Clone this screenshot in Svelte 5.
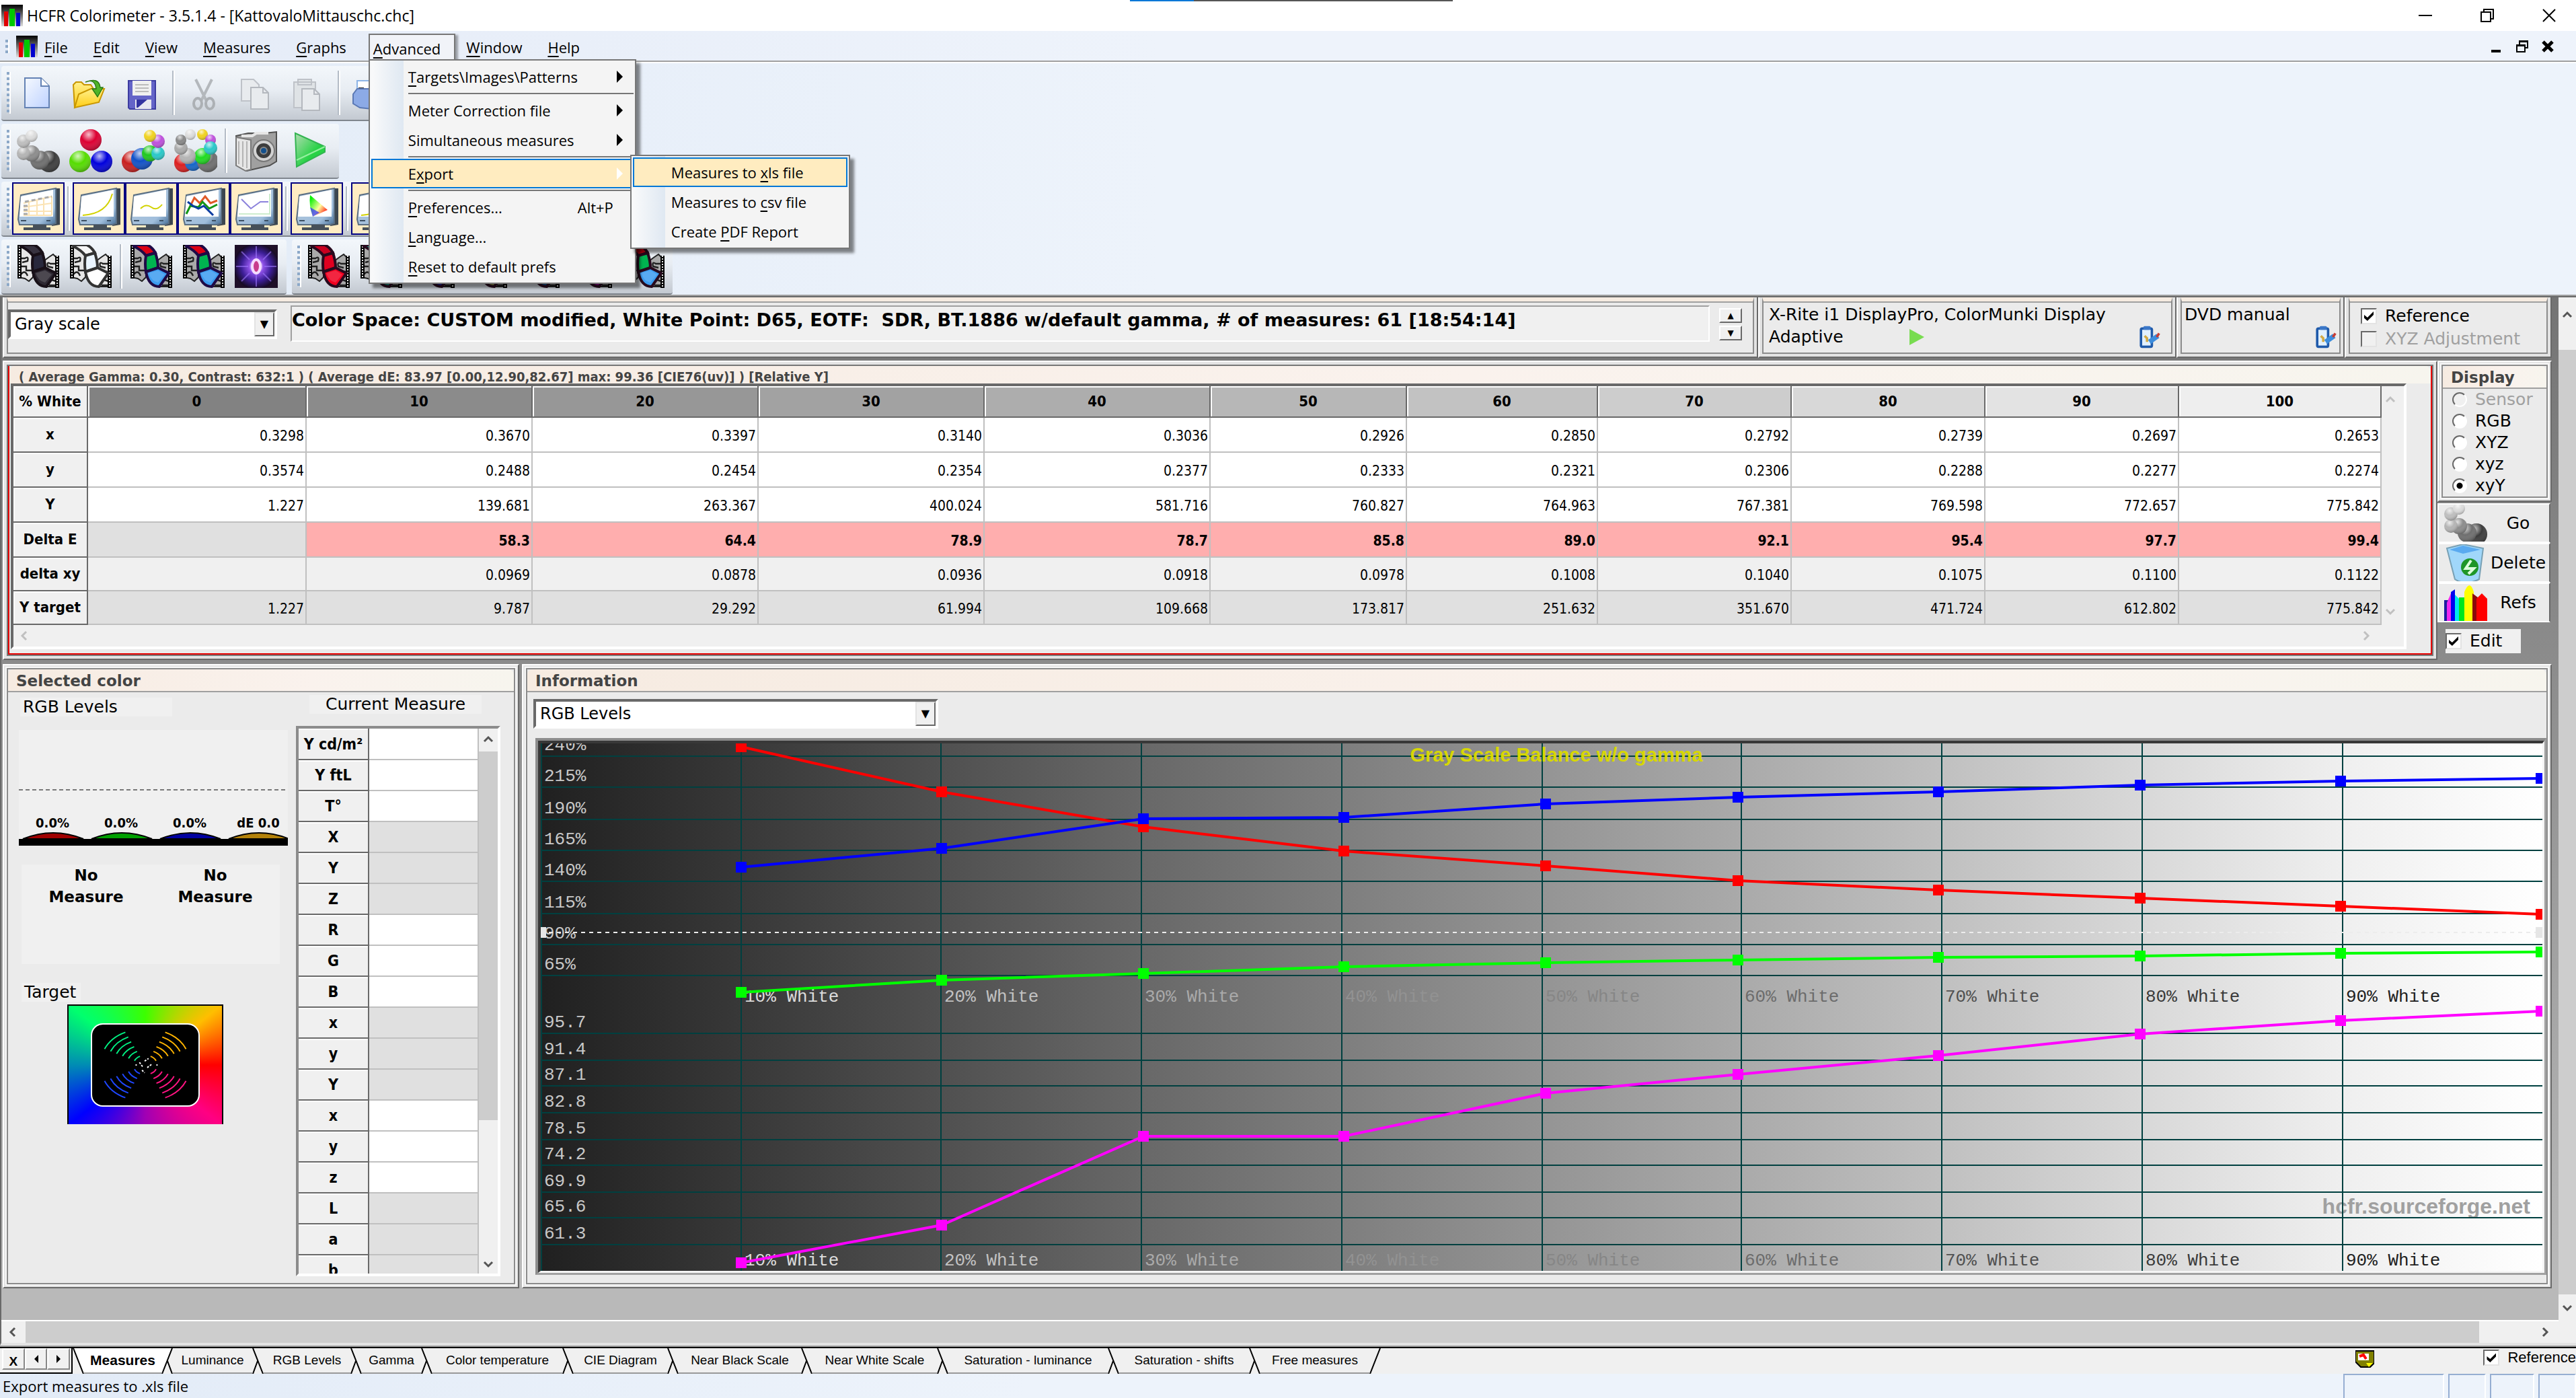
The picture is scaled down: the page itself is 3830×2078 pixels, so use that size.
<script>
  const menus = ['File', 'Edit', 'View', 'Measures', 'Graphs', 'Advanced', 'Window', 'Help'];

  // `key` is the index of the underlined access key
  const advanced = [
    { label: 'Targets\\Images\\Patterns', key: 0, sub: true },
    { sep: true },
    { label: 'Meter Correction file', key: -1, sub: true },
    { label: 'Simultaneous measures', key: -1, sub: true },
    { sep: true },
    { label: 'Export', key: 1, sub: true, active: true },
    { sep: true },
    { label: 'Preferences...', key: 0, hint: 'Alt+P' },
    { label: 'Language...', key: 0 },
    { label: 'Reset to default prefs', key: 0 }
  ];
  const exportItems = [
    { label: 'Measures to xls file', key: 12, active: true },
    { label: 'Measures to csv file', key: 12 },
    { label: 'Create PDF Report', key: 7 }
  ];

  const columns = [
    { label: '0', w: 325, bg: '#828282' },
    { label: '10', w: 336, bg: '#8b8b8b' },
    { label: '20', w: 336, bg: '#979797' },
    { label: '30', w: 336, bg: '#a2a2a2' },
    { label: '40', w: 336, bg: '#adadad' },
    { label: '50', w: 292, bg: '#b7b7b7' },
    { label: '60', w: 284, bg: '#c2c2c2' },
    { label: '70', w: 288, bg: '#cdcdcd' },
    { label: '80', w: 288, bg: '#d8d8d8' },
    { label: '90', w: 288, bg: '#e3e3e3' },
    { label: '100', w: 301, bg: '#eeeeee' }
  ];
  const rows = [
    { label: 'x', kind: '', v: ['0.3298', '0.3670', '0.3397', '0.3140', '0.3036', '0.2926', '0.2850', '0.2792', '0.2739', '0.2697', '0.2653'] },
    { label: 'y', kind: '', v: ['0.3574', '0.2488', '0.2454', '0.2354', '0.2377', '0.2333', '0.2321', '0.2306', '0.2288', '0.2277', '0.2274'] },
    { label: 'Y', kind: '', v: ['1.227', '139.681', '263.367', '400.024', '581.716', '760.827', '764.963', '767.381', '769.598', '772.657', '775.842'] },
    { label: 'Delta E', kind: 'bad', v: ['', '58.3', '64.4', '78.9', '78.7', '85.8', '89.0', '92.1', '95.4', '97.7', '99.4'] },
    { label: 'delta xy', kind: 'light', v: ['', '0.0969', '0.0878', '0.0936', '0.0918', '0.0978', '0.1008', '0.1040', '0.1075', '0.1100', '0.1122'] },
    { label: 'Y target', kind: 'dark', v: ['1.227', '9.787', '29.292', '61.994', '109.668', '173.817', '251.632', '351.670', '471.724', '612.802', '775.842'] }
  ];

  const measureRows = ['Y cd/m²', 'Y ftL', 'T°', 'X', 'Y', 'Z', 'R', 'G', 'B', 'x', 'y', 'Y', 'x', 'y', 'z', 'L', 'a', 'b'];
  const shaded = (i) => Math.floor(i / 3) % 2 === 1;

  const tabs = [
    { label: 'Measures', w: 115 },
    { label: 'Luminance', w: 118 },
    { label: 'RGB Levels', w: 129 },
    { label: 'Gamma', w: 88 },
    { label: 'Color temperature', w: 193 },
    { label: 'CIE Diagram', w: 139 },
    { label: 'Near Black Scale', w: 182 },
    { label: 'Near White Scale', w: 185 },
    { label: 'Saturation - luminance', w: 237 },
    { label: 'Saturation - shifts', w: 193 },
    { label: 'Free measures', w: 162 }
  ];

  // chart space is 2976 x 784
  const gridX = [298, 595, 893, 1191, 1489, 1785, 2083, 2381, 2679];
  const gridLabels = ['#dcdcdc', '#c2c2c2', '#aaaaaa', '#929292', '#868686', '#6c6c6c', '#505050', '#3a3a3a', '#202020'];
  const upper = [[19, '240%'], [65, '215%'], [113, '190%'], [159, '165%'], [205, '140%'], [253, '115%'], [299, '90%'], [345, '65%']];
  const lower = [[431, '95.7'], [471, '91.4'], [509, '87.1'], [549, '82.8'], [589, '78.5'], [627, '74.2'], [667, '69.9'], [705, '65.6'], [745, '61.3']];
  const px = [298, 596, 896, 1194, 1494, 1780, 2078, 2378, 2676, 2974];
  const series = [
    { color: '#ff0000', y: [5, 72, 124, 160, 182, 204, 218, 230, 242, 254] },
    { color: '#00ff00', y: [370, 352, 342, 332, 326, 322, 318, 316, 312, 310] },
    { color: '#0000ff', y: [184, 156, 112, 110, 90, 80, 72, 62, 56, 52] },
    { color: '#ff00ff', y: [772, 716, 584, 584, 520, 492, 464, 432, 412, 398] }
  ];
  const line = (ys) => ys.map((y, i) => `${px[i]},${y}`).join(' ');

  const grayBalls = [[24, 24, 8, '#3c3c3c'], [17, 23, 7, '#6e6e6e'], [11, 18, 6, '#8c8c8c'], [5, 18, 5, '#b4b4b4'], [5, 9, 5, '#bebebe'], [11, 5, 4.5, '#dcdcdc']];
  const rgbBalls = [[16, 8, 8, '#dc0032'], [8, 24, 8, '#55dc00'], [24, 24, 8, '#0000dc']];
  const colorBalls = [[8, 24, 8, '#c81e1e'], [15, 22, 8, '#0f50c8'], [21, 18, 6, '#1ec81e'], [27, 18, 5, '#28c8c8'], [27, 9, 5, '#be50dc'], [21, 5, 4.5, '#f0d21e']];
  const ringBalls = [[7, 25, 7, '#dc1e1e'], [14, 25, 6, '#1464c8'], [25, 24, 8, '#6e6e6e'], [21, 20, 6, '#1edc1e'], [10, 20, 6, '#b4b4b4'], [5, 14, 5, '#aaa'], [5, 8, 4, '#888'], [12, 4, 4, '#ddd'], [21, 4, 4, '#f0d21e'], [27, 8, 4, '#be50dc'], [27, 14, 5, '#28c8c8']];

  const films = [['#c80020', '#e00020', '#f00020'], ['#109080', '#109080', '#109080'], ['#202090', '#202090', '#2020a0'], ['#909050', '#909050', '#909050'], ['#105090', '#105090', '#105090'], ['#900090', '#900090', '#900090'], ['#dc0014', '#00b450', '#3c9cf0']];

  const displayModes = ['Sensor', 'RGB', 'XYZ', 'xyz', 'xyY'];
  let mode = $state('xyY');
  let activeTab = $state('Measures');
</script>

{#snippet access(label, key)}{#if key < 0}{label}{:else}{label.slice(0, key)}<u>{label[key]}</u>{label.slice(key + 1)}{/if}{/snippet}

{#snippet logo()}
  <svg class="logo" viewBox="0 0 16 16" aria-hidden="true">
    <rect width="16" height="16" fill="url(#logoBg)" />
    <rect x="2" y="5" width="3" height="11" fill="#e00000" />
    <rect x="6" y="3" width="4" height="13" fill="#00c800" />
    <rect x="11" y="6" width="3" height="10" fill="#0000d0" />
  </svg>
{/snippet}

{#snippet balls(list)}
  <svg class="icon" viewBox="0 0 32 32" aria-hidden="true">
    {#each list as [cx, cy, r, fill]}
      <circle {cx} {cy} {r} {fill} />
      <circle {cx} {cy} {r} fill="url(#shine)" />
    {/each}
  </svg>
{/snippet}

{#snippet film(a, b, c, back, edge)}
  <svg class="icon" viewBox="0 0 32 32" aria-hidden="true">
    <path d="M1 1V24L6 25L9 27L12 24V6L5 1Z" fill={back} stroke="#222" />
    <path d="M20 12L24 9L27 7L29 9H31V31H23L20 22Z" fill={back} stroke="#222" />
    <path d="M2 10H6Q9 8 8 12L4 13M2 16H7V19H11M3 22Q6 18 8 23M29 14H25Q22 12 23 16L27 17M30 20H24M23 25L29 27M24 30H30" fill="none" stroke="#222" stroke-width="1.2" />
    <path d="M2 0V25M30 8V32" stroke="#000" stroke-width="3" />
    <path d="M2 1V25M30 8V31" stroke="#e6e6e6" stroke-dasharray="1 1" />
    <path d="M3 1Q9 4 12 8L19 6Q17 2 13 0H3Z" fill={a} stroke={edge} stroke-width="2" />
    <path d="M12 8L19 6Q21 12 21 17L12 20Q11 14 12 8Z" fill={b} stroke={edge} stroke-width="2" />
    <path d="M12 20L21 17L29 21L22 31Q14 31 12 20Z" fill={c} stroke={edge} stroke-width="2" />
    <path d="M14 21L21 19L26 22L21 28Q16 27 14 21Z" fill="#fff" opacity="0.15" />
  </svg>
{/snippet}

{#snippet monitor(kind)}
  <svg class="icon" viewBox="0 0 32 32" aria-hidden="true">
    <path d="M29 1L32 1V28L26 29Z" fill="#3c4650" />
    <path d="M3 6L29 1V27L26 28H2L1 24Z" fill="url(#bezel)" stroke="#5a6e82" />
    <path d="M3 7L27 2V22H2Z" fill="#fff" />
    <path d="M3 25H7M22 25H25" stroke="#3c5064" />
    <path d="M12 28H22V30H25V32H5V30H12Z" fill="#46505a" />
    {#if kind === 'table'}
      <path d="M5 12L26 7M5 15L26 12M5 18H26M5 21H26M9 11V21M15 10V21M20 9V21M26 7V21" stroke="#fbe3b4" fill="none" />
      <path d="M6 11L26 7M5 14H8M5 17H8M5 20H8" stroke="#aaa" stroke-width="1.5" stroke-dasharray="3 2" />
    {:else if kind === 'curve'}
      <path d="M4 21Q22 20 26 5" fill="none" stroke="#d2d200" />
    {:else if kind === 'wave'}
      <path d="M8 16Q12 12 16 15T24 13" fill="none" stroke="#d2d200" />
    {:else if kind === 'rgb'}
      <path d="M6 14L9 8L13 12L17 7L21 12L26 10" fill="none" stroke="#e05a28" stroke-width="1.5" />
      <path d="M3 20L6 14L12 15L15 11L20 16L26 13" fill="none" stroke="#149614" stroke-width="1.5" />
      <path d="M4 11L8 14L12 16L16 14L23 21" fill="none" stroke="#0a3ca0" stroke-width="1.5" />
    {:else if kind === 'temp'}
      <path d="M5 9L12 16L19 11L25 11" fill="none" stroke="#8c82dc" />
      <path d="M3 20H26V5" fill="none" stroke="#cdeccd" />
    {:else}
      <path d="M11 6L24 17L13 22Q10 14 11 6Z" fill="url(#cie)" />
      <path d="M11 15L13 22L18 19Z" fill="#2828ff" opacity="0.7" />
    {/if}
  </svg>
{/snippet}

{#snippet chevron(dir)}
  <svg class="chevron {dir}" viewBox="0 0 16 16" aria-hidden="true"><path d="M2 11L8 5L14 11" fill="none" stroke="currentColor" stroke-width="3" /></svg>
{/snippet}

{#snippet setup()}
  <svg class="setup" viewBox="0 0 20 20" aria-hidden="true">
    <rect x="3" y="2" width="11" height="17" rx="2" fill="#1f5aaa" />
    <rect x="5" y="4" width="7" height="13" fill="#e1f0ff" />
    <rect x="6" y="1" width="6" height="3" rx="1" fill="#3c78c8" />
    <path d="M7 9L9 11V14" fill="none" stroke="#d2aa46" stroke-width="2" />
    <path d="M11 14L18 9" stroke="#3c8cdc" stroke-width="4" />
    <path d="M17 10L19 7" stroke="#c83c32" stroke-width="2" />
  </svg>
{/snippet}

<svg class="defs" aria-hidden="true">
  <defs>
    <linearGradient id="logoBg" x2="0" y2="1"><stop offset="0" stop-color="#000" /><stop offset="1" stop-color="#ddd" /></linearGradient>
    <radialGradient id="shine" cx="0.4" cy="0.25" r="0.8"><stop offset="0" stop-color="#fff" stop-opacity="0.75" /><stop offset="0.45" stop-color="#fff" stop-opacity="0" /><stop offset="1" stop-color="#000" stop-opacity="0.35" /></radialGradient>
    <linearGradient id="bezel" x2="1" y2="1"><stop offset="0" stop-color="#b4c8dc" /><stop offset="0.75" stop-color="#a0bedc" /><stop offset="1" stop-color="#466e96" /></linearGradient>
    <linearGradient id="cie" x2="1" y2="0.8"><stop offset="0.1" stop-color="#00f000" /><stop offset="0.6" stop-color="#ffffa0" /><stop offset="1" stop-color="#ff0000" /></linearGradient>
    <linearGradient id="play" x2="1" y2="1"><stop offset="0" stop-color="#b4dcb4" /><stop offset="0.6" stop-color="#28d246" /></linearGradient>
    <linearGradient id="paper" x2="1" y2="1"><stop offset="0" stop-color="#f5f9ff" /><stop offset="1" stop-color="#bed2ff" /></linearGradient>
    <linearGradient id="folder" x2="0" y2="1"><stop offset="0" stop-color="#fff08c" /><stop offset="1" stop-color="#ffcd14" /></linearGradient>
    <radialGradient id="nova"><stop offset="0" stop-color="#c83c8c" /><stop offset="0.18" stop-color="#e6c8ff" /><stop offset="0.32" stop-color="#8c50e6" /><stop offset="0.65" stop-color="#3c1e96" /><stop offset="1" stop-color="#140a1e" /></radialGradient>
  </defs>
</svg>

<div class="app">
  <header class="titlebar">
    {@render logo()}
    <h1>HCFR Colorimeter - 3.5.1.4 - [KattovaloMittauschc.chc]</h1>
    <div class="progress"><i></i></div>
    <div class="winbtns">
      <button aria-label="Minimize"><svg viewBox="0 0 20 20"><path d="M0 10H20" /></svg></button>
      <button aria-label="Restore"><svg viewBox="0 0 20 20"><path d="M1 5H15V19H1ZM5 5V1H19V15H15" /></svg></button>
      <button aria-label="Close"><svg viewBox="0 0 20 20"><path d="M1 1L19 19M19 1L1 19" /></svg></button>
    </div>
  </header>

  <nav class="menubar">
    <span class="grip short"></span>
    {@render logo()}
    <div class="menus">
      {#each menus as m}
        {#if m === 'Advanced'}
          <div class="open">
            <button class="menu">{@render access(m, 0)}</button>
            <div class="popup main">
              {#each advanced as it}
                {#if it.sep}
                  <hr />
                {:else}
                  <button class="item" class:active={it.active}>
                    <span>{@render access(it.label, it.key)}</span>
                    {#if it.hint}<span class="hint">{it.hint}</span>{/if}
                    {#if it.sub}<i class="arrow"></i>{/if}
                  </button>
                {/if}
              {/each}
              <div class="popup sub">
                {#each exportItems as it}
                  <button class="item" class:active={it.active}><span>{@render access(it.label, it.key)}</span></button>
                {/each}
              </div>
            </div>
          </div>
        {:else}
          <button class="menu">{@render access(m, 0)}</button>
        {/if}
      {/each}
    </div>
    <div class="childbtns">
      <button aria-label="Minimize document"><svg viewBox="0 0 20 20"><path d="M2 17H16" stroke-width="4" /></svg></button>
      <button aria-label="Restore document"><svg viewBox="0 0 20 20"><path d="M2 8H14V18H2ZM2 9H14M6 8V2H18V12H14M6 3H18" stroke-width="2" /></svg></button>
      <button aria-label="Close document"><svg viewBox="0 0 20 20"><path d="M3 3L17 17M17 3L3 17" stroke-width="5" /></svg></button>
    </div>
  </nav>

  <div class="toolbars">
    <div class="toolbar file">
      <span class="grip"></span>
      <button class="tool" aria-label="New"><svg class="icon" viewBox="0 0 32 32"><path d="M6 5H18L24 11V27H6Z" fill="url(#paper)" stroke="#6482b4" /><path d="M18 5V11H24" fill="#fff" stroke="#6482b4" /></svg></button>
      <button class="tool" aria-label="Open"><svg class="icon" viewBox="0 0 32 32"><path d="M3 10L5 8H9L11 10H16L18 13V20L4 27Z" fill="url(#folder)" stroke="#c89600" /><path d="M4 27L7 17L16 13L26 13L22 23Z" fill="url(#folder)" stroke="#c89600" /><path d="M12 8Q19 5 20 13H17L21 19L25 12H23Q22 4 12 8Z" fill="#50b428" stroke="#287814" stroke-width="0.7" /></svg></button>
      <button class="tool" aria-label="Save"><svg class="icon" viewBox="0 0 32 32"><path d="M5 7H25V28H6L5 27Z" fill="#6464c8" stroke="#3c3ca0" /><rect x="8" y="7" width="14" height="11" fill="#f0f0f0" /><path d="M10 10H20M10 12.500H20M10 15H20" stroke="#aaa" stroke-width="0.8" /><rect x="10" y="21" width="12" height="7" fill="#e6e6f0" /><path d="M11 21H19L12 27H11Z" fill="#3232a0" /></svg></button>
      <i class="sep"></i>
      <button class="tool" aria-label="Cut"><svg class="icon" viewBox="0 0 32 32"><path d="M10 6L18 22M22 6L14 22" stroke="#b4b8bc" stroke-width="2" /><ellipse cx="11.500" cy="24" rx="3" ry="4" fill="none" stroke="#acb0b4" stroke-width="2" /><ellipse cx="20.500" cy="24" rx="3" ry="4" fill="none" stroke="#acb0b4" stroke-width="2" /></svg></button>
      <button class="tool" aria-label="Copy"><svg class="icon" viewBox="0 0 32 32"><path d="M5 6H14L18 10V22H5Z" fill="#e8ebee" stroke="#bec2c8" /><path d="M12 12H21L25 16V28H12Z" fill="#e8ebee" stroke="#b4b8be" /><path d="M21 12V16H25" fill="none" stroke="#b4b8be" /></svg></button>
      <button class="tool" aria-label="Paste"><svg class="icon" viewBox="0 0 32 32"><path d="M5 8H21V27H5ZM8 6H18V10H8Z" fill="#dfe3e6" stroke="#bec2c8" /><path d="M11 13H20L24 17V29H11Z" fill="#e8ebee" stroke="#b4b8be" /><path d="M20 13V17H24" fill="none" stroke="#b4b8be" /></svg></button>
      <i class="sep"></i>
      <button class="tool" aria-label="Print"><svg class="icon" viewBox="0 0 32 32"><path d="M7 7H21V16H7Z" fill="#fff" stroke="#8cb4e6" /><path d="M8 12H12V16H8Z" fill="#333" /><path d="M4 17L7 13H23L27 17V24L18 28L9 27L4 24Z" fill="#8caae6" stroke="#5a78b4" /></svg></button>
    </div>
    <div class="toolbar measure">
      <span class="grip"></span>
      <button class="tool" aria-label="Measure gray scale">{@render balls(grayBalls)}</button>
      <button class="tool" aria-label="Measure primaries">{@render balls(rgbBalls)}</button>
      <button class="tool" aria-label="Measure secondaries">{@render balls(colorBalls)}</button>
      <button class="tool" aria-label="Measure all">{@render balls(ringBalls)}</button>
      <i class="sep"></i>
      <button class="tool" aria-label="Sensor">
        <svg class="icon" viewBox="0 0 32 32">
          <path d="M1 5L10 3H22L31 2V24L26 27L9 31L1 26Z" fill="#a0a0a0" stroke="#505050" />
          <path d="M1 6L12 8V30L8 31L1 27Z" fill="#e6e6e6" stroke="#787878" />
          <path d="M3 9V26M6 9V28M9 9V29" stroke="#b4b4b4" />
          <path d="M5 5H13L16 3H25" stroke="#e6e6e6" fill="none" stroke-width="2" />
          <circle cx="21.500" cy="16" r="8" fill="#d2d2d2" stroke="#787878" />
          <circle cx="21.500" cy="16" r="5.500" fill="#3c3c3c" />
          <circle cx="21.500" cy="16" r="2.500" fill="#14508c" stroke="#888" />
        </svg>
      </button>
      <button class="tool" aria-label="Run"><svg class="icon" viewBox="0 0 32 32"><path d="M6 3L28 13V17L7 28Z" fill="url(#play)" stroke="#32b450" /><path d="M7 23L28 13" stroke="#96f0a0" /></svg></button>
    </div>
    <div class="toolbar views">
      <span class="grip"></span>
      <button class="tool on" aria-label="Measures view">{@render monitor('table')}</button>
      <i class="sep"></i>
      <button class="tool on" aria-label="Luminance view">{@render monitor('curve')}</button>
      <button class="tool on" aria-label="Gamma view">{@render monitor('wave')}</button>
      <button class="tool on" aria-label="RGB view">{@render monitor('rgb')}</button>
      <button class="tool on" aria-label="Temperature view">{@render monitor('temp')}</button>
      <i class="sep"></i>
      <button class="tool on" aria-label="CIE view">{@render monitor('cie')}</button>
      <i class="sep"></i>
      <button class="tool on" aria-label="Near black view">{@render monitor('curve')}</button>
    </div>
    <div class="pair">
      <div class="toolbar pat">
        <span class="grip"></span>
        <button class="tool" aria-label="Near black">{@render film('#37323f', '#28283c', '#2d2832', '#e6e6e6', '#181018')}</button>
        <button class="tool" aria-label="Near white">{@render film('#f5f5f5', '#ebf5ff', '#fff', '#e6e6e6', '#333')}</button>
        <i class="sep"></i>
        <button class="tool" aria-label="Primaries">{@render film('#dc0014', '#00b450', '#3c9cf0', '#aaa', '#1e0a46')}</button>
        <button class="tool" aria-label="Secondaries">{@render film('#dc0014', '#00b450', '#3c9cf0', '#aaa', '#1e0a46')}</button>
        <button class="tool" aria-label="Contrast">
          <svg class="icon" viewBox="0 0 32 32">
            <rect width="32" height="32" fill="#1e0f28" />
            <circle cx="16" cy="16" r="17" fill="url(#nova)" />
            <path d="M16 1V10M16 22V31M1 16H10M22 16H31M5 5L11 11M27 5L21 11M5 27L11 21M27 27L21 21" stroke="#a078ff" opacity="0.6" />
            <ellipse cx="16" cy="16" rx="3" ry="5" fill="#c83c8c" stroke="#f5dcff" stroke-width="2" />
          </svg>
        </button>
      </div>
      <div class="toolbar sat">
        <span class="grip"></span>
        {#each films as [a, b, c], i}
          <button class="tool" aria-label="Saturation {i + 1}">{@render film(a, b, c, '#aaa', '#280a1e')}</button>
        {/each}
      </div>
    </div>
  </div>

  <main class="client">
    <div class="doc">
      <div class="row top">
        <section class="panel grow">
          <div class="inner bar">
            <div class="combo scale">
              <select aria-label="Measure set"><option>Gray scale</option></select>
              <span class="drop">▼</span>
            </div>
            <p class="info">Color Space: CUSTOM modified, White Point: D65, EOTF:&nbsp; SDR, BT.1886 w/default gamma, # of measures: 61 [18:54:14]</p>
            <div class="spin">
              <button aria-label="Previous">▲</button>
              <button aria-label="Next">▼</button>
            </div>
          </div>
        </section>
        <section class="panel sensor">
          <div class="inner">
            <p>X-Rite i1 DisplayPro, ColorMunki Display</p>
            <div class="line"><span>Adaptive</span><i class="go"></i><button aria-label="Configure sensor">{@render setup()}</button></div>
          </div>
        </section>
        <section class="panel gen">
          <div class="inner">
            <p>DVD manual</p>
            <div class="line end"><button aria-label="Configure generator">{@render setup()}</button></div>
          </div>
        </section>
        <section class="panel refs">
          <div class="inner">
            <label><input type="checkbox" checked /> Reference</label>
            <label class="off"><input type="checkbox" disabled /> XYZ Adjustment</label>
          </div>
        </section>
      </div>

      <div class="row middle">
        <section class="panel grow measures">
          <div class="inner">
            <h2 class="small">( Average Gamma: 0.30, Contrast: 632:1 ) ( Average dE: 83.97 [0.00,12.90,82.67] max: 99.36 [CIE76(uv)] ) [Relative Y]</h2>
            <div class="sheet">
              <table class="data">
                <colgroup>
                  <col style="width:110px" />
                  {#each columns as c}<col style="width:{c.w}px" />{/each}
                </colgroup>
                <thead>
                  <tr><th>% White</th>{#each columns as c}<th style="background:{c.bg}">{c.label}</th>{/each}</tr>
                </thead>
                <tbody>
                  {#each rows as r}
                    <tr class={r.kind}>
                      <th>{r.label}</th>
                      {#each r.v as v}<td class:none={!v}>{v}</td>{/each}
                    </tr>
                  {/each}
                </tbody>
              </table>
              <div class="vside">{@render chevron('up')}{@render chevron('down')}</div>
              <div class="hside">{@render chevron('left')}{@render chevron('right')}</div>
            </div>
          </div>
        </section>
        <aside>
          <section class="panel display">
            <div class="inner">
              <h2>Display</h2>
              {#each displayModes as m}
                <label class:off={m === 'Sensor'}><input type="radio" value={m} bind:group={mode} disabled={m === 'Sensor'} /> {m}</label>
              {/each}
            </div>
          </section>
          <div class="actions">
            <button>{@render balls(grayBalls)}<span>Go</span></button>
            <button>
              <svg class="icon" viewBox="0 0 32 32" aria-hidden="true"><path d="M2 5L14 2L29 5L26 28Q16 33 8 28Z" fill="#a0d7fa" stroke="#78a0b4" /><path d="M4 6L14 3L27 6L14 9Z" fill="#5aaaf0" /><circle cx="19" cy="19" r="6.500" fill="#1e9628" /><path d="M20 14L16 20H22L18 24" fill="none" stroke="#dcffdc" stroke-width="2" /></svg>
              <span>Delete</span>
            </button>
            <button>
              <svg class="icon" viewBox="0 0 32 32" aria-hidden="true">
                <path d="M0 30V14H3V30Z" fill="#1e1ea0" /><path d="M2 30V16L5 9V30Z" fill="#f028f0" /><path d="M5 30V8L8 6V30Z" fill="#0000f0" /><path d="M8 30V10L11 13V30Z" fill="#00e6f0" /><path d="M11 30V12H15V30Z" fill="#00e61e" /><path d="M15 30V8Q19 -2 22 8V30Z" fill="#ffff00" /><path d="M21 30V9L25 12V30Z" fill="#8c0a0a" /><path d="M24 30V13L28 9L32 13V30Z" fill="#ff0000" />
              </svg>
              <span>Refs</span>
            </button>
          </div>
          <label class="edit"><input type="checkbox" checked /> Edit</label>
        </aside>
      </div>

      <div class="row bottom">
        <section class="panel selected">
          <div class="inner">
            <h2>Selected color</h2>
            <div class="cols">
              <div class="left">
                <p class="cap wide">RGB Levels</p>
                <svg class="levels" viewBox="0 0 400 172">
                  <rect width="400" height="172" fill="#f0f0f0" />
                  <path d="M0 89H400" stroke="#787878" stroke-width="2" stroke-dasharray="6 4" />
                  <path d="M0 162H400V172H0Z" />
                  {#each [['0.0%', '#a00000'], ['0.0%', '#00a000'], ['0.0%', '#0000a0'], ['dE 0.0', '#b4820a']] as [t, c], i}
                    <path d="M{6 + i * 102} 162Q{51 + i * 102} 144 {96 + i * 102} 162Z" fill={c} stroke="#000" stroke-width="2" />
                    <text x={50 + i * 102} y="145">{t}</text>
                  {/each}
                </svg>
                <div class="nomeas"><b>No<br />Measure</b><b>No<br />Measure</b></div>
                <p class="cap">Target</p>
                <div class="target">
                  <svg viewBox="0 0 162 124" aria-hidden="true">
                    {#each [['#00f082', -1, -1], ['#ffb400', 1, -1], ['#1e46ff', -1, 1], ['#ff1482', 1, 1]] as [c, sx, sy]}
                      {#each [18, 28, 38, 48, 58, 68] as r}
                        <path d="M{81 + sx * r * 0.45} {62 + sy * r * 0.74}Q{81 + sx * r * 0.78} {62 + sy * r * 0.62} {81 + sx * r * 0.92} {62 + sy * r * 0.36}" fill="none" stroke={c} stroke-width="2" />
                      {/each}
                    {/each}
                    <path d="M72 58L78 66M80 56L86 52M84 66L92 60M76 70L80 74M66 62H68M98 62H100" stroke="#fff" stroke-width="2" stroke-dasharray="3 2" />
                  </svg>
                </div>
              </div>
              <div class="right">
                <p class="cap">Current Measure</p>
                <div class="scroller">
                  <table>
                    <tbody>
                      {#each measureRows as m, i}<tr class:shaded={shaded(i)}><th>{m}</th><td></td></tr>{/each}
                    </tbody>
                  </table>
                  <div class="vscroll">{@render chevron('up')}<i class="thumb"></i>{@render chevron('down')}</div>
                </div>
              </div>
            </div>
          </div>
        </section>

        <section class="panel grow information">
          <div class="inner">
            <h2>Information</h2>
            <div class="combo graph">
              <select aria-label="Graph"><option>RGB Levels</option></select>
              <span class="drop">▼</span>
            </div>
            <div class="chart">
              <svg viewBox="0 0 2976 784">
                <defs>
                  <linearGradient id="ramp">
                    <stop offset="0" stop-color="#202020" /><stop offset="0.1" stop-color="#383838" /><stop offset="0.2" stop-color="#505050" />
                    <stop offset="0.3" stop-color="#686868" /><stop offset="0.4" stop-color="#7e7e7e" /><stop offset="0.5" stop-color="#949494" />
                    <stop offset="0.6" stop-color="#aaaaaa" /><stop offset="0.7" stop-color="#c0c0c0" /><stop offset="0.8" stop-color="#d8d8d8" />
                    <stop offset="0.9" stop-color="#efefef" /><stop offset="1" stop-color="#ffffff" />
                  </linearGradient>
                </defs>
                <rect width="2976" height="784" fill="url(#ramp)" />
                <text class="mark" x="2958" y="699">hcfr.sourceforge.net</text>
                {#each [...upper, ...lower] as [y, t]}
                  <text class="tick" x="5" y={y - 9}>{t}</text>
                {/each}
                {#each gridX as x, i}
                  <text class="tick" x={x + 5} y="384" style="fill:{gridLabels[i]}">{i + 1}0% White</text>
                  <text class="tick" x={x + 5} y="776" style="fill:{gridLabels[i]}">{i + 1}0% White</text>
                {/each}
                <g class="grid">
                  <path d="M1 0V784" />
                  {#each gridX as x}<path d="M{x} 0V784" />{/each}
                  {#each [...upper, ...lower] as [y]}<path d="M0 {y}H2976" />{/each}
                </g>
                <text class="title" x="1510" y="27">Gray Scale Balance w/o gamma</text>
                <path d="M0 281H2976" stroke="#ececec" stroke-width="2" stroke-dasharray="6 6" />
                <path d="M0 273H8V289H0ZM2966 273H2976V289H2966Z" fill="#e6e6e6" />
                {#each series as s}
                  <polyline points={line(s.y)} fill="none" stroke={s.color} stroke-width="4" />
                  {#each s.y as y, i}<rect x={px[i] - 8} y={y - 8} width="16" height="16" fill={s.color} />{/each}
                {/each}
              </svg>
            </div>
          </div>
        </section>
      </div>
    </div>
    <div class="vscroll page">{@render chevron('up')}<i class="thumb"></i>{@render chevron('down')}</div>
    <div class="hscroll">{@render chevron('left')}<i class="thumb"></i>{@render chevron('right')}</div>
  </main>

  <div class="tabbar">
    <div class="nav">
      <button aria-label="Close tab">X</button>
      <button aria-label="Previous tab"><i class="tri l"></i></button>
      <button aria-label="Next tab"><i class="tri r"></i></button>
    </div>
    {#each tabs as t, i}
      <svg class="slant" viewBox="0 0 17 38" aria-hidden="true">
        {#if i === 0}
          <path d="M0 0H17V38Z" fill="#fff" stroke="none" /><path d="M1 0L16 38" />
        {:else if i === 1}
          <path d="M0 0H17L1 38H0Z" fill="#fff" stroke="none" /><path d="M16 0L1 38M9 19L16 38" />
        {:else}
          <path d="M1 0L16 38M1 38L8 19" />
        {/if}
      </svg>
      <button class="tab" class:sel={activeTab === t.label} style="width:{t.w}px" onclick={() => (activeTab = t.label)}>{t.label}</button>
    {/each}
    <svg class="slant" viewBox="0 0 17 38" aria-hidden="true"><path d="M16 0L1 38" /></svg>
    <svg class="badge" viewBox="0 0 14 14" aria-hidden="true"><path d="M0 1H14V10L11 13H4L0 9Z" fill="#808000" stroke="#000" /><rect x="2" y="3" width="8" height="5" fill="#fff" /><path d="M3 5L6 4L8 7" stroke="#f00" fill="none" stroke-width="2" /><path d="M8 10H13L10 13Z" fill="#ff0" /></svg>
    <label class="ref"><input type="checkbox" checked /> Reference</label>
  </div>

  <footer class="status">
    <span>Export measures to .xls file</span>
    <i class="pane a"></i><i class="pane b"></i><i class="pane c"></i><i class="pane d"></i>
  </footer>
</div>

<style>
  :global(body) { margin: 0; background: #fff; }
  .app { min-height: 100vh; display: flex; flex-direction: column; overflow: hidden; color: #000; font: 25px/28px 'DejaVu Sans', sans-serif; }
  .app *, .app *::before, .app *::after { box-sizing: border-box; }
  .defs { position: absolute; width: 0; height: 0; }
  h1, h2, p { margin: 0; }
  button { font: inherit; color: inherit; border: 0; background: none; padding: 0; margin: 0; }
  svg { display: block; flex: none; }
  select, input { margin: 0; font: inherit; }

  /* title bar */
  .titlebar { height: 46px; display: flex; align-items: center; gap: 6px; padding-left: 2px; position: relative; font-family: 'Open Sans', sans-serif; }
  .logo { width: 32px; height: 32px; }
  h1 { flex: 1; font-size: 23px; font-weight: 400; line-height: 32px; }
  .progress { position: absolute; top: 0; left: 1680px; width: 480px; height: 2px; background: #555; }
  .progress i { display: block; width: 95px; height: 2px; background: #0078d7; }
  .winbtns { display: flex; margin-right: -6px; }
  .winbtns button { width: 92px; height: 44px; display: grid; place-items: center; }
  .winbtns svg { width: 20px; height: 20px; fill: none; stroke: #000; stroke-width: 2; }

  /* menu bar */
  .menubar { height: 48px; display: flex; align-items: center; gap: 10px; padding: 0 32px 0 8px; background: linear-gradient(90deg, #e4ebf7, #eef3fb 45%); border-bottom: 2px solid #fff; box-shadow: inset 0 -2px #a0a0a0; font-family: 'Open Sans', sans-serif; }
  .grip { width: 6px; height: 62px; flex: none; background: repeating-linear-gradient(#8ca8c8 0 4px, transparent 4px 8px); border-right: 2px solid #fff; }
  .grip.short { height: 20px; }
  .menus { display: flex; flex: 1; align-self: stretch; margin-left: -19px; padding: 4px 0 2px; }
  .menu { height: 40px; padding: 0 19px; font-size: 22px; line-height: 38px; }
  u { text-decoration-thickness: 2px; text-underline-offset: 4px; }
  .open { position: relative; z-index: 5; margin: 0 -3px 0 14px; }
  .open .menu { height: 42px; padding: 0 20px 0 5px; margin: 0; border: 2px solid #777; border-bottom: 0; background: #f1f3f8; box-shadow: 4px 2px 3px #0005; line-height: 36px; }
  .popup { position: absolute; background: linear-gradient(90deg, #f8f9fa 4px, #dfe8f2 50px, #f4f4f4 50px); border: 2px solid #777; box-shadow: 6px 6px 4px #0007; font-size: 22px; }
  .main { top: 38px; left: 0; width: 398px; padding: 2px; }
  .sub { top: 140px; left: 387px; width: 327px; padding: 2px; }
  .item { display: flex; align-items: center; justify-content: space-between; position: relative; width: 100%; height: 44px; padding: 0 28px 0 53px; border: 2px solid transparent; white-space: nowrap; }
  .sub .item { padding-left: 55px; }
  .item.active { background: #ffecc0; border-color: #0078d7; }
  .item .arrow { position: absolute; right: 14px; border: 9px solid transparent; border-left-color: #000; border-right: 0; }
  .active .arrow { border-left-color: #fff; }
  .popup hr { height: 2px; margin: 2px 0 2px 55px; border: 0; background: #777; }
  .childbtns { display: flex; gap: 18px; }
  .childbtns svg { width: 20px; height: 20px; fill: none; stroke: #000; }

  /* toolbars */
  .toolbars { display: flex; flex-direction: column; align-items: flex-start; gap: 4px; padding: 4px 2px 0; background: linear-gradient(90deg, #e2ebf7, #edf3fb 45%); }
  .toolbar { display: flex; align-items: center; height: 82px; padding-left: 8px; border-radius: 4px; background: linear-gradient(#f3f7fb, #e8edf3 45%, #c3c9d1); border-bottom: 2px solid #80868e; }
  .toolbar .grip { margin-right: 2px; }
  .file { width: 780px; }
  .measure { width: 502px; }
  .views { width: 800px; }
  .pat { width: 424px; }
  .sat { width: 566px; }
  .pair { display: flex; gap: 8px; }
  .tool { width: 78px; height: 78px; flex: none; display: grid; place-items: center; }
  .tool.on { background: #ffecc3; border: 2px solid #000080; }
  .icon { width: 64px; height: 64px; }
  .sep { width: 4px; height: 66px; margin: 0 4px; flex: none; background: linear-gradient(90deg, #b4bcc6 2px, #fff 2px); }

  /* document client area */
  .client { flex: 1; display: grid; grid-template-columns: minmax(0, 1fr) 26px; grid-template-rows: 1fr 32px; border: 2px solid #696969; border-width: 2px 0 0 2px; border-bottom: 4px solid #e3e3e3; box-shadow: inset 2px 0 #eee; outline: 2px solid #a0a0a0; background: #f0f0f0; margin-top: 2px; }
  .doc { padding: 0 10px 0 2px; background: linear-gradient(#747474, #8c8c8c 36%, #b9b9b9 95%); border-bottom: 2px solid #fff; }
  .row { display: flex; }
  .grow { flex: 1; min-width: 0; }
  .panel { border: 2px solid; border-color: #fff #696969 #696969 #fff; background: #e3e3e3; padding: 4px; display: flex; }
  .inner { flex: 1; min-width: 0; border: 2px solid #8c8c8c; background: #ebebeb; box-shadow: 0 0 0 2px #f8f8f8; }
  h2 { height: 34px; padding: 0 12px; font: bold 23px/34px 'DejaVu Sans', sans-serif; color: #444; background: linear-gradient(90deg, #f6ebe1, #faf2ed 60%, #f7f5ee); border-bottom: 2px solid #a0a0a0; border-radius: 8px 8px 0 0; overflow: hidden; white-space: nowrap; }

  .top { height: 90px; margin-bottom: 4px; }
  .top .panel { border-top: 0; padding-top: 0; }
  .top .inner { border-top: 6px solid #f6ebe1; box-shadow: inset 0 2px #a0a0a0; }
  .bar { display: flex; align-items: flex-start; gap: 20px; padding: 6px 16px 0 0; }
  .combo { display: flex; height: 44px; border: 4px solid; border-color: #696969 #fff #fff #696969; background: #fff; }
  .combo select { flex: 1; min-width: 0; appearance: none; border: 0; background: none; padding: 0 6px; color: #000; font-size: 24px; }
  .drop { width: 30px; font-size: 16px; line-height: 32px; text-align: center; background: #f0f0f0; border: 2px solid; border-color: #e3e3e3 #696969 #696969 #e3e3e3; }
  .scale { width: 400px; margin-top: 6px; }
  .info { flex: 1; height: 54px; border: 2px solid; border-color: #a0a0a0 #fff #fff #a0a0a0; background: #f0f0f0; font-weight: bold; font-size: 27px; line-height: 40px; white-space: nowrap; overflow: hidden; }
  .top .info { line-height: 40px; }
  .spin { display: flex; flex-direction: column; gap: 4px; margin: 4px 0 0 -6px; }
  .spin button { width: 34px; height: 22px; font-size: 12px; line-height: 16px; background: #f0f0f0; border: 2px solid; border-color: #fff #696969 #696969 #fff; }
  .sensor { width: 622px; }
  .gen { width: 250px; }
  .refs { width: 308px; }
  .sensor .inner, .gen .inner { padding: 6px 16px 0 8px; white-space: nowrap; }
  .gen .inner { padding-left: 4px; padding-right: 4px; }
  .top p { line-height: 28px; }
  .line { display: flex; align-items: center; height: 38px; }
  .line.end { justify-content: flex-end; }
  .line button { margin-left: auto; }
  .line .go { margin-left: 98px; border: 12px solid transparent; border-left: 22px solid #78dc50; border-right: 0; }
  .line.end button { margin-left: 0; }
  .setup { width: 36px; height: 36px; }
  label { display: flex; align-items: center; gap: 12px; white-space: nowrap; }
  .off { color: #a0a0a0; }
  .refs .inner { padding: 6px 16px 0; display: flex; flex-direction: column; gap: 2px; }
  .refs label { height: 32px; }
  input[type='checkbox'] { appearance: none; width: 24px; height: 24px; flex: none; position: relative; background: #fff; border: 2px solid; border-color: #696969 #e3e3e3 #e3e3e3 #696969; }
  input[type='checkbox']:disabled { background: #f0f0f0; }
  input[type='checkbox']:checked::after { content: ''; position: absolute; inset: 3px; background: #000; clip-path: polygon(0 35%, 35% 65%, 100% 0, 100% 35%, 35% 100%, 0 70%); }

  /* measures table */
  .middle { margin-bottom: 6px; }
  .measures .inner { border-color: #777; box-shadow: inset 2px -2px #e60000, inset -2px 0 #e60000; padding: 0 38px 8px 4px; }
  .measures h2.small { height: 26px; margin: 0 -36px 0 -2px; border: 0; font: bold 20px/32px 'DejaVu Sans Condensed', sans-serif; padding: 0 14px; }
  .sheet { display: grid; grid-template-columns: minmax(0, 1fr) 40px; grid-template-rows: auto 32px; border: 4px solid; border-color: #696969 #fff #fff #696969; background: #f0f0f0; }
  .data { width: 100%; table-layout: fixed; border-collapse: collapse; font: 21px/26px 'DejaVu Sans Condensed', sans-serif; }
  .data th { height: 52px; padding: 0; font-size: 22px; background: #f0f0f0; border: 2px solid #696969; border-width: 0 2px 2px 0; box-shadow: inset 2px 2px #fff; }
  .data thead th { height: 46px; }
  .data td { padding: 4px 2px 0; text-align: right; background: #fff; border: 2px solid #c0c0c0; border-width: 0 2px 2px 0; }
  .data .bad td { background: #ffaeae; font-weight: bold; }
  .data .bad td.none { background: #e0e0e0; }
  .data .light td { background: #f0f0f0; }
  .data .dark td { background: #e0e0e0; }
  .data .light th, .data .dark th { height: 50px; }
  .vside { display: flex; flex-direction: column; justify-content: space-between; align-items: center; padding: 12px 0; color: #c0c0c0; }
  .hside { display: flex; justify-content: space-between; align-items: center; padding: 0 8px; color: #c0c0c0; }
  .chevron { width: 16px; height: 16px; }
  .down { transform: rotate(180deg); }
  .left.chevron { transform: rotate(-90deg); }
  .right.chevron { transform: rotate(90deg); }

  aside { width: 170px; }
  .display label { height: 32px; padding-left: 14px; gap: 12px; }
  input[type='radio'] { appearance: none; width: 22px; height: 22px; flex: none; border-radius: 50%; background: #fff; border: 2px solid; border-color: #696969 #fff #fff #696969; }
  input[type='radio']:disabled { background: #f0f0f0; }
  input[type='radio']:checked { background: radial-gradient(#000 4px, #fff 5px); }
  .actions { margin-top: 2px; }
  .actions button { display: flex; align-items: center; width: 168px; height: 59px; padding-left: 8px; overflow: hidden; background: #ebebeb; border: 2px solid; border-color: #fff #696969 #fff #fff; }
  .actions span { flex: 1; }
  .edit { width: 112px; height: 36px; margin: 10px 0 0 12px; background: #f0f0f0; }

  /* selected color */
  .selected { width: 768px; margin-right: 4px; }
  .cols { display: flex; justify-content: space-between; padding: 4px 20px 10px 16px; }
  .cap { width: 88px; height: 28px; padding-left: 4px; background: #f0f0f0; }
  .left .cap { margin: 4px 0 0 4px; }
  .left .cap.wide { width: 226px; margin-left: 2px; }
  .levels { width: 400px; height: 172px; margin-top: 20px; }
  .levels text { font: bold 20px 'DejaVu Sans Condensed', sans-serif; text-anchor: middle; }
  .nomeas { display: flex; width: 384px; height: 148px; margin: 28px 0 28px 4px; background: #f0f0f0; text-align: center; font: bold 23px/32px 'DejaVu Sans', sans-serif; }
  .nomeas b { flex: 1; }
  .target { width: 232px; height: 178px; margin: 4px 0 0 72px; border: 2px solid #000; border-bottom: 0; display: grid; place-items: center; background: conic-gradient(from 0deg, #3cff00, #ffbe00 52deg, #ff0000 90deg, #ff0082 128deg, #a000b4 180deg, #0000ff 232deg, #008cb4 270deg, #00ff6e 308deg, #3cff00); }
  .target svg { width: 162px; height: 124px; background: #000; border: 2px solid #fff; border-radius: 18px; }
  .right .cap { width: 256px; margin-left: 20px; text-align: center; padding: 0; }
  .scroller { display: flex; height: 818px; margin-top: 18px; width: 304px; overflow: hidden; border: 4px solid; border-color: #8c8c8c #fff #fff #8c8c8c; background: #f0f0f0; }
  .scroller table { width: 268px; flex: none; table-layout: fixed; border-collapse: collapse; align-self: flex-start; font: bold 23px/28px 'DejaVu Sans Condensed', sans-serif; }
  .scroller th { width: 104px; height: 46px; padding: 0; white-space: nowrap; background: #f0f0f0; border: 2px solid #696969; border-width: 0 2px 2px 0; box-shadow: inset 0 2px #fff; }
  .scroller td { background: #fff; border: 2px solid #c0c0c0; border-width: 0 2px 2px 0; }
  .scroller .shaded td { background: #e0e0e0; }
  .vscroll { flex: 1; display: flex; flex-direction: column; align-items: center; padding: 8px 0 6px; color: #555; background: #f0f0f0; }
  .scroller .thumb { width: 28px; height: 548px; margin: 10px 0 auto; background: #cdcdcd; }

  /* chart */
  .graph { width: 602px; margin: 10px 0 0 9px; }
  .chart { margin: 14px 0 10px 12px; border: 8px ridge; border-width: 8px 6px 6px 8px; border-color: #8c8c8c #f5f5f5 #f5f5f5 #8c8c8c; }
  .chart svg { width: 100%; }
  .grid path { stroke: #004040; stroke-width: 2; }
  .tick { font: 26px 'Liberation Mono', monospace; fill: #c8c8c8; }
  .title { font: bold 29px 'Liberation Sans', sans-serif; fill: #d7d700; text-anchor: middle; }
  .mark { font: bold 32px 'Liberation Sans', sans-serif; fill: #a0a0a0; text-anchor: end; }

  /* page scrollbars */
  .page { padding: 18px 0 12px; }
  .page .thumb { flex: 1; width: 26px; margin: 44px 0 12px; background: #cdcdcd; }
  .hscroll { grid-column: 1 / -1; display: flex; align-items: center; padding: 0 38px 0 9px; color: #555; }
  .hscroll .thumb { flex: 1; height: 32px; margin: 0 90px 0 11px; background: #cdcdcd; }

  /* tab strip */
  .tabbar { display: flex; height: 40px; padding: 0; border-top: 2px solid #000; background: #f0f0f0; margin-top: 2px; font: 19px/36px 'Liberation Sans', sans-serif; }
  .nav { display: flex; width: 108px; padding: 0 2px 4px 3px; border-right: 2px solid #000; border-bottom: 2px solid #000; }
  .nav button { flex: 1; display: grid; place-items: center; font-weight: bold; border: 2px solid; border-color: #fff #888 #888 #fff; }
  .tri { border: 6px solid transparent; }
  .tri.l { border-right-color: #000; border-left: 0; }
  .tri.r { border-left-color: #000; border-right: 0; }
  .slant { width: 17px; height: 38px; fill: none; stroke: #000; stroke-width: 2; }
  .tab { flex: none; height: 38px; text-align: center; white-space: nowrap; border-bottom: 2px solid #999; }
  .tab.sel { background: #fff; font-size: 21px; font-weight: bold; }
  .badge { width: 28px; height: 28px; margin: 2px 0 0 auto; }
  .ref { margin: 0 0 0 162px; height: 28px; font-size: 22px; }

  .status { display: flex; height: 36px; padding-left: 4px; background: linear-gradient(90deg, #e2ebf7, #edf3fb 40%); font: 22px/36px 'Open Sans', sans-serif; }
  .status span { flex: 1; }
  .pane { margin-right: 6px; border: 2px solid #96aed2; border-right-color: #fff; border-bottom: 0; }
  .pane.a { width: 150px; }
  .pane.b { width: 56px; }
  .pane.c { width: 66px; }
  .pane.d { width: 56px; margin: 0; }
</style>
